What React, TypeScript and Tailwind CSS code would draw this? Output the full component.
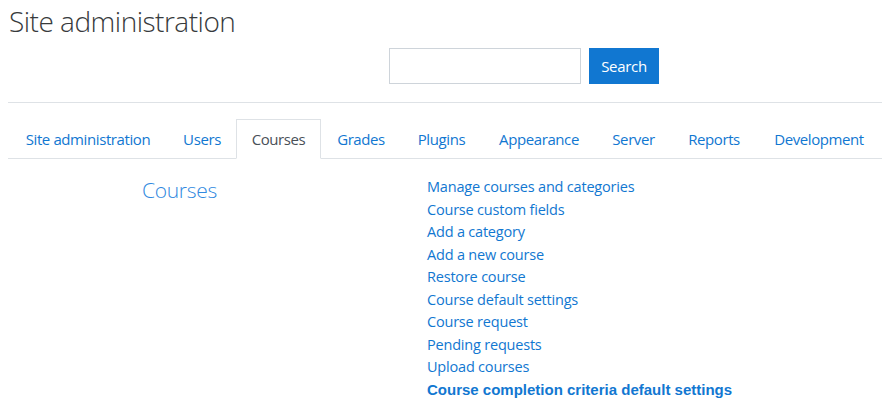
import React from "react";

const tabs = [
  { label: "Site administration", w: "w-[160px]" },
  { label: "Users", w: "w-[68px]" },
  { label: "Courses", w: "w-[85px]", active: true },
  { label: "Grades", w: "w-[80px]" },
  { label: "Plugins", w: "w-[81px]" },
  { label: "Appearance", w: "w-[114px]" },
  { label: "Server", w: "w-[75px]" },
  { label: "Reports", w: "w-[86px]" },
  { label: "Development", w: "w-[124px]" },
];

const links = [
  "Manage courses and categories",
  "Course custom fields",
  "Add a category",
  "Add a new course",
  "Restore course",
  "Course default settings",
  "Course request",
  "Pending requests",
  "Upload courses",
];

export default function App() {
  return (
    <div className="h-[407px] w-[882px] overflow-hidden bg-white pl-2 font-['Open_Sans',sans-serif]">
      <h2 className="pt-[1px] pl-[1px] text-[28px] font-light leading-[40px] tracking-[-0.5px] text-[#373a3c]">
        Site administration
      </h2>

      <div className="mt-[7px] flex gap-[8px] pl-[381px]">
        <input className="h-[36px] w-[192px] border border-[#ced4da] bg-white" />
        <button className="h-[36px] w-[70px] bg-[#1177d1] text-[15px] text-white tracking-[-0.3px]">
          Search
        </button>
      </div>

      <div className="mt-[18px] border-t border-[#dee2e6]" />

      <div className="mt-[16px] flex border-b border-[#dee2e6]">
        {tabs.map((t) =>
          t.active ? (
            <div
              key={t.label}
              className={`${t.w} -mb-px h-[40px] border border-b-white border-[#dee2e6] bg-white text-center text-[15px] leading-[38px] tracking-[-0.4px] text-[#495057]`}
            >
              {t.label}
            </div>
          ) : (
            <div
              key={t.label}
              className={`${t.w} h-[39px] text-center text-[15px] leading-[40px] tracking-[-0.4px] text-[#1177d1]`}
            >
              {t.label}
            </div>
          )
        )}
      </div>

      <div className="mt-[16px] flex">
        <div className="w-[419px] pl-[134px]">
          <h3 className="text-[21px] font-light leading-[30px] tracking-[-0.3px] text-[#3189e0]">Courses</h3>
        </div>
        <ul className="pt-[1px]">
          {links.map((l) => (
            <li key={l} className="text-[14.5px] leading-[22.5px] tracking-[-0.2px] text-[#1177d1]">
              {l}
            </li>
          ))}
          <li className="font-['Liberation_Sans',sans-serif] text-[15px] font-bold leading-[22.5px] text-[#1177d1]">
            Course completion criteria default settings
          </li>
        </ul>
      </div>
    </div>
  );
}
